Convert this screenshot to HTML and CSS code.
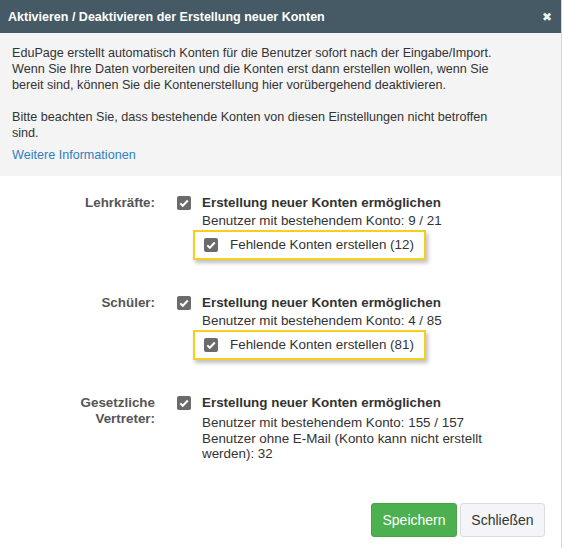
FILE: index.html
```html
<!DOCTYPE html>
<html lang="de">
<head>
  <meta charset="UTF-8">
  <title>Erstellung neuer Konten</title>
  <link rel="stylesheet" href="styles.css">
</head>
<body>

  <div class="dialog">
    <div class="dialog-header">
      <span class="dialog-title">Aktivieren / Deaktivieren der Erstellung neuer Konten</span>
      <span class="dialog-close">&#x2716;</span>
    </div>

    <!-- Info -->
    <div class="info">
      <p>EduPage erstellt automatisch Konten für die Benutzer sofort nach der Eingabe/Import. Wenn Sie Ihre Daten vorbereiten und die Konten erst dann erstellen wollen, wenn Sie bereit sind, können Sie die Kontenerstellung hier vorübergehend deaktivieren.</p>
      <p>Bitte beachten Sie, dass bestehende Konten von diesen Einstellungen nicht betroffen sind.</p>
      <a class="info-link" href="#">Weitere Informationen</a>
    </div>

    <!-- Settings -->
    <div class="settings">
      <div class="row">
        <div class="row-label">Lehrkräfte:</div>
        <div class="row-body">
          <label class="check main">
            <span class="box"><svg viewBox="0 0 14 14"><path d="M3.3 7.4l2.5 2.4 5-5.3" /></svg></span>
            Erstellung neuer Konten ermöglichen
          </label>
          <div class="note">Benutzer mit bestehendem Konto: 9 / 21</div>
          <div class="highlight">
            <label class="check">
              <span class="box"><svg viewBox="0 0 14 14"><path d="M3.3 7.4l2.5 2.4 5-5.3" /></svg></span>
              Fehlende Konten erstellen (12)
            </label>
          </div>
        </div>
      </div>

      <div class="row">
        <div class="row-label">Schüler:</div>
        <div class="row-body">
          <label class="check main">
            <span class="box"><svg viewBox="0 0 14 14"><path d="M3.3 7.4l2.5 2.4 5-5.3" /></svg></span>
            Erstellung neuer Konten ermöglichen
          </label>
          <div class="note">Benutzer mit bestehendem Konto: 4 / 85</div>
          <div class="highlight">
            <label class="check">
              <span class="box"><svg viewBox="0 0 14 14"><path d="M3.3 7.4l2.5 2.4 5-5.3" /></svg></span>
              Fehlende Konten erstellen (81)
            </label>
          </div>
        </div>
      </div>

      <div class="row">
        <div class="row-label">Gesetzliche<br>Vertreter:</div>
        <div class="row-body">
          <label class="check main">
            <span class="box"><svg viewBox="0 0 14 14"><path d="M3.3 7.4l2.5 2.4 5-5.3" /></svg></span>
            Erstellung neuer Konten ermöglichen
          </label>
          <div class="note spaced">Benutzer mit bestehendem Konto: 155 / 157<br>Benutzer ohne E-Mail (Konto kann nicht erstellt werden): 32</div>
        </div>
      </div>
    </div>

    <!-- Buttons -->
    <div class="actions">
      <button class="btn btn-save">Speichern</button>
      <button class="btn btn-close">Schließen</button>
    </div>
  </div>

</body>
</html>
```

FILE: styles.css
```css
* {
  box-sizing: border-box;
}

body {
  margin: 0;
  font-family: 'Liberation Sans', Arial, sans-serif;
  font-size: 13.4px;
  color: #333;
  background: #fff;
}

.dialog {
  width: 562px;
  height: 548px;
  border-right: 1px solid #d6d6d6;
  overflow: hidden;
}

.dialog-header {
  height: 33px;
  background: #455a64;
  color: #fff;
  display: flex;
  align-items: center;
  justify-content: space-between;
  padding: 0 9px 0 8px;
}

.dialog-title {
  font-weight: bold;
  font-size: 12.5px;
}

.dialog-close {
  font-size: 12px;
  color: #f2f2f2;
}

.info {
  background: #f4f4f4;
  padding: 12px 55px 13px 12px;
  font-size: 12.6px;
  line-height: 16px;
}

.info p {
  margin: 0 0 16px;
}

.info p + p {
  margin-bottom: 6px;
}

.info-link {
  display: block;
  color: #2f7fc1;
  text-decoration: none;
}

.settings {
  padding-top: 19px;
}

.row {
  display: grid;
  grid-template-columns: 155px 318px;
  column-gap: 22px;
  margin-bottom: 35px;
  line-height: 16px;
}

.row:last-child {
  margin-bottom: 0;
}

.row-label {
  text-align: right;
  font-weight: bold;
  color: #555;
}

.check {
  display: flex;
  align-items: center;
  gap: 11px;
}

.check.main {
  font-weight: bold;
  margin-bottom: 2px;
}

.box {
  flex: none;
  width: 14px;
  height: 14px;
  border-radius: 2px;
  background: #6b6b6b;
  display: flex;
}

.box svg {
  width: 14px;
  height: 14px;
  fill: none;
  stroke: #fff;
  stroke-width: 2;
}

.note {
  padding-left: 25px;
}

.note.spaced {
  margin-top: 4px;
  line-height: 15.5px;
}

.highlight {
  width: fit-content;
  margin: 1px 0 0 16px;
  padding: 5px 10px 5px 9px;
  border: 2px solid #f6ce1c;
  box-shadow: 2px 3px 4px rgba(0, 0, 0, 0.25);
}

.highlight .check {
  gap: 12px;
}

.actions {
  display: flex;
  justify-content: flex-end;
  gap: 3px;
  padding: 41px 16px 0 0;
}

.btn {
  height: 34px;
  padding: 0;
  font-family: 'Liberation Sans', Arial, sans-serif;
  font-size: 14px;
  border-radius: 3px;
  cursor: pointer;
}

.btn-save {
  width: 86px;
  background: #4caf50;
  border: 1px solid #47a34a;
  color: #fff;
}

.btn-close {
  width: 85px;
  background: #f4f5f8;
  border: 1px solid #dcdcdc;
  color: #333;
}
```
